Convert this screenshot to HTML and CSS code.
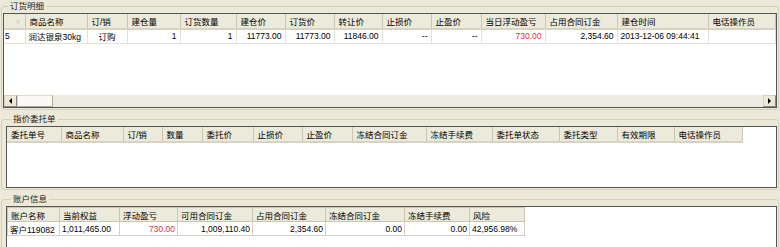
FILE: index.html
```html
<!DOCTYPE html>
<html lang="zh-CN">
<head>
  <meta charset="UTF-8">
  <title>订货明细</title>
  <link rel="stylesheet" href="styles.css">
</head>
<body>
  <fieldset class="group g1">
    <legend>订货明细</legend>
    <div class="frame f1">
      <table class="list">
        <colgroup>
          <col style="width:21px"><col style="width:62px"><col style="width:40px"><col style="width:53px">
          <col style="width:56px"><col style="width:49px"><col style="width:49px"><col style="width:48px">
          <col style="width:49px"><col style="width:50px"><col style="width:64px"><col style="width:72px">
          <col style="width:91px"><col>
        </colgroup>
        <tr>
          <th><span class="sort">▿</span></th><th>商品名称</th><th>订/销</th><th>建仓量</th><th>订货数量</th>
          <th>建仓价</th><th>订货价</th><th>转让价</th><th>止损价</th><th>止盈价</th>
          <th>当日浮动盈亏</th><th>占用合同订金</th><th>建仓时间</th><th>电话操作员</th>
        </tr>
        <tr>
          <td class="cut">5</td><td>润达银泉30kg</td><td class="c">订购</td><td class="r">1</td><td class="r">1</td>
          <td class="r">11773.00</td><td class="r">11773.00</td><td class="r">11846.00</td><td class="r">--</td><td class="r">--</td>
          <td class="r red">730.00</td><td class="r">2,354.60</td><td>2013-12-06 09:44:41</td><td></td>
        </tr>
      </table>
      <div class="spacer"></div>
      <div class="hscroll">
        <div class="btn"><span class="arrow left"></span></div>
        <div class="thumb"></div>
        <div class="track"></div>
        <div class="btn"><span class="arrow right"></span></div>
      </div>
    </div>
  </fieldset>

  <fieldset class="group g2">
    <legend>指价委托单</legend>
    <div class="frame f2">
      <table class="list narrow">
        <colgroup>
          <col style="width:54px"><col style="width:62px"><col style="width:39px"><col style="width:40px">
          <col style="width:51px"><col style="width:49px"><col style="width:50px"><col style="width:74px">
          <col style="width:66px"><col style="width:67px"><col style="width:58px"><col style="width:57px">
          <col style="width:68px">
        </colgroup>
        <tr>
          <th>委托单号</th><th>商品名称</th><th>订/销</th><th>数量</th><th>委托价</th><th>止损价</th>
          <th>止盈价</th><th>冻结合同订金</th><th>冻结手续费</th><th>委托单状态</th><th>委托类型</th>
          <th>有效期限</th><th>电话操作员</th>
        </tr>
      </table>
    </div>
  </fieldset>

  <fieldset class="group g3">
    <legend>账户信息</legend>
    <div class="frame f3">
      <table class="grid">
        <colgroup>
          <col style="width:52px"><col style="width:60px"><col style="width:58px"><col style="width:75px">
          <col style="width:73px"><col style="width:79px"><col style="width:65px"><col style="width:55px">
        </colgroup>
        <tr>
          <th>账户名称</th><th>当前权益</th><th>浮动盈亏</th><th>可用合同订金</th>
          <th>占用合同订金</th><th>冻结合同订金</th><th>冻结手续费</th><th>风险</th>
        </tr>
        <tr>
          <td>客户119082</td><td>1,011,465.00</td><td class="r red">730.00</td><td class="r">1,009,110.40</td>
          <td class="r">2,354.60</td><td class="r">0.00</td><td class="r">0.00</td><td>42,956.98%</td>
        </tr>
      </table>
    </div>
  </fieldset>
</body>
</html>
```

FILE: styles.css
```css
* { box-sizing: border-box; }
body { margin: 0; width: 780px; height: 247px; overflow: hidden; background: #ece9d8; font-family: "Liberation Sans", "Noto Sans CJK SC", sans-serif; font-size: 8.5px; color: #000; }

.group { margin: 0 1px 3px; padding: 1px 1px 1px 1px; border: 1px solid #d3d0bf; border-radius: 3px; min-width: 0; }
.group legend { margin-left: 5px; padding: 0 2px; height: 12px; line-height: 12px; color: #1a1a1a; }
.g2, .g3 { padding-left: 4px; }

.frame { background: #fff; border: 1px solid #555; overflow: hidden; }
.f1 { height: 95px; display: flex; flex-direction: column; }
.f2 { height: 62px; }
.f3 { height: 50px; }
.spacer { flex: 1; }

table { border-collapse: collapse; table-layout: fixed; }
.list { width: 100%; }
.list.narrow { width: 735px; }
.list th { height: 15px; padding: 0 4px; background: #ebeadb; font-weight: normal; text-align: left; white-space: nowrap; overflow: hidden; border-right: 1px solid #c9c6b4; border-bottom: 2px solid #d6d3c2; }
.list td { height: 14px; padding: 0 3px; white-space: nowrap; overflow: hidden; border-right: 1px solid #e3e1d8; border-bottom: 1px solid #e3e1d8; }
.list td.cut { padding-left: 1px; }
.sort { color: #b5b2a4; font-size: 7px; margin-left: 8px; }

.grid { border: 1px solid #aca899; }
.grid th { height: 14px; padding: 0 3px; background: #ebeadb; font-weight: normal; text-align: left; white-space: nowrap; border: 1px solid #c9c6b4; }
.grid td { height: 14px; padding: 0 2px; white-space: nowrap; border: 1px solid #d4d0c8; }

.r { text-align: right; }
.c { text-align: center; }
.red { color: #e0303f; }

.hscroll { display: flex; height: 12px; background: #f3f1e8; }
.btn { width: 13px; background: #ece9d8; border: 1px solid #d4d0c8; border-right-color: #8a887c; border-bottom-color: #8a887c; display: flex; align-items: center; justify-content: center; }
.thumb { width: 36px; background: #faf9f5; border: 1px solid #dedbcc; border-right-color: #aca899; border-bottom-color: #aca899; }
.track { flex: 1; background: #eeece2; }
.arrow { width: 0; height: 0; border-top: 3px solid transparent; border-bottom: 3px solid transparent; }
.arrow.left { border-right: 3px solid #000; }
.arrow.right { border-left: 3px solid #000; }
```
